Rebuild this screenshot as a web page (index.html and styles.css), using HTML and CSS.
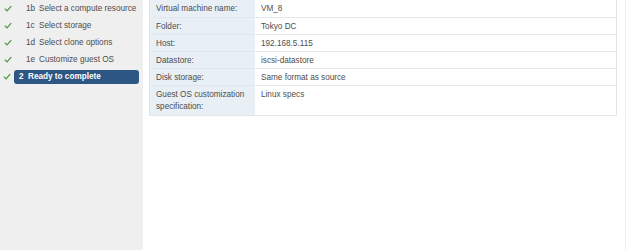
FILE: index.html
```html
<!DOCTYPE html>
<html>
<head>
<meta charset="utf-8">
<link rel="stylesheet" href="styles.css">
</head>
<body>
<div class="wizard">
  <nav class="steps">
    <div class="step"><span class="check"><svg viewBox="0 0 10 8" width="8" height="7"><path d="M1 4.2 L3.8 7 L9 1" fill="none" stroke="#4a9a3c" stroke-width="1.6"/></svg></span><span class="num">1b</span><span class="label">Select a compute resource</span></div>
    <div class="step"><span class="check"><svg viewBox="0 0 10 8" width="8" height="7"><path d="M1 4.2 L3.8 7 L9 1" fill="none" stroke="#4a9a3c" stroke-width="1.6"/></svg></span><span class="num">1c</span><span class="label">Select storage</span></div>
    <div class="step"><span class="check"><svg viewBox="0 0 10 8" width="8" height="7"><path d="M1 4.2 L3.8 7 L9 1" fill="none" stroke="#4a9a3c" stroke-width="1.6"/></svg></span><span class="num">1d</span><span class="label">Select clone options</span></div>
    <div class="step"><span class="check"><svg viewBox="0 0 10 8" width="8" height="7"><path d="M1 4.2 L3.8 7 L9 1" fill="none" stroke="#4a9a3c" stroke-width="1.6"/></svg></span><span class="num">1e</span><span class="label">Customize guest OS</span></div>
    <div class="step current"><span class="check small"><svg viewBox="0 0 10 8" width="8" height="7"><path d="M1 4.2 L3.8 7 L9 1" fill="none" stroke="#4a9a3c" stroke-width="1.6"/></svg></span><span class="pill"><span class="num">2</span><span class="label">Ready to complete</span></span></div>
  </nav>
  <main class="content">
    <div class="summary">
      <div class="row"><div class="key">Virtual machine name:</div><div class="val">VM_8</div></div>
      <div class="row"><div class="key">Folder:</div><div class="val">Tokyo DC</div></div>
      <div class="row"><div class="key">Host:</div><div class="val">192.168.5.115</div></div>
      <div class="row"><div class="key">Datastore:</div><div class="val">iscsi-datastore</div></div>
      <div class="row"><div class="key">Disk storage:</div><div class="val">Same format as source</div></div>
      <div class="row tall"><div class="key">Guest OS customization specification:</div><div class="val">Linux specs</div></div>
    </div>
  </main>
</div>
</body>
</html>
```
FILE: styles.css
```css
html, body {
  margin: 0;
  padding: 0;
  background: #ffffff;
}
body {
  font-family: "Liberation Sans", Arial, sans-serif;
  font-size: 8.2px;
  color: #4d4d4d;
  width: 628px;
  height: 250px;
  overflow: hidden;
}
.wizard {
  display: flex;
  height: 250px;
}
.steps {
  width: 143px;
  flex: none;
  background: #efefef;
  display: flex;
  flex-direction: column;
}
.step {
  height: 17px;
  display: flex;
  align-items: center;
}
.check {
  width: 26px;
  padding-left: 4px;
  box-sizing: border-box;
  display: flex;
  align-items: center;
}
.check.small {
  width: 14px;
  padding-left: 3px;
}
.num {
  width: 13px;
}
.label {
  white-space: nowrap;
}
.pill {
  display: flex;
  align-items: center;
  background: #2d5685;
  color: #ffffff;
  font-weight: bold;
  width: 125px;
  height: 14px;
  border-radius: 3px;
  padding-left: 5px;
  box-sizing: border-box;
}
.pill .num {
  width: 9px;
}
.content {
  flex: 1;
  padding-left: 6px;
  padding-right: 8px;
  border-right: 1px solid #f0f0f0;
  margin-right: 2px;
}
.summary {
  border: 1px solid #e3e6e9;
  border-top: none;
  background: #ffffff;
}
.row {
  display: flex;
  height: 17px;
  box-sizing: border-box;
  border-top: 1px solid #e3e7eb;
}
.row:first-child {
  border-top: none;
}
.key {
  width: 105px;
  flex: none;
  box-sizing: border-box;
  background: #e8eff5;
  padding: 0 6px;
  display: flex;
  align-items: center;
}
.val {
  flex: 1;
  padding: 0 6px;
  display: flex;
  align-items: center;
}
.row.tall {
  height: 30px;
}
.row.tall .key, .row.tall .val {
  align-items: flex-start;
  padding-top: 3px;
  line-height: 12px;
}
```
